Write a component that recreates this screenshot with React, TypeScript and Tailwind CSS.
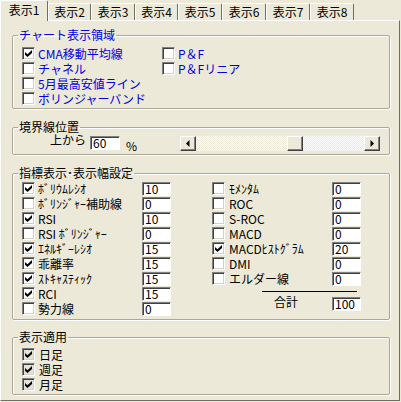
import clsx from "clsx";

const tabs = [
  { label: "表示1", w: "w-[48px]" },
  { label: "表示2", w: "w-[43px]" },
  { label: "表示3", w: "w-[44px]" },
  { label: "表示4", w: "w-[43px]" },
  { label: "表示5", w: "w-[44px]" },
  { label: "表示6", w: "w-[44px]" },
  { label: "表示7", w: "w-[44px]" },
  { label: "表示8", w: "w-[44px]" },
];

const leftRows = [
  { label: "ﾎﾞﾘｳﾑﾚｼｵ", checked: true, value: "10" },
  { label: "ﾎﾞﾘﾝｼﾞｬｰ補助線", checked: false, value: "0" },
  { label: "RSI", checked: true, value: "10" },
  { label: "RSI ﾎﾞﾘﾝｼﾞｬｰ", checked: false, value: "0" },
  { label: "ｴﾈﾙｷﾞｰﾚｼｵ", checked: true, value: "15" },
  { label: "乖離率", checked: true, value: "15" },
  { label: "ｽﾄｷｬｽﾃｨｯｸ", checked: true, value: "15" },
  { label: "RCI", checked: true, value: "15" },
  { label: "勢力線", checked: false, value: "0" },
];

const rightRows = [
  { label: "ﾓﾒﾝﾀﾑ", checked: false, value: "0" },
  { label: "ROC", checked: false, value: "0" },
  { label: "S-ROC", checked: false, value: "0" },
  { label: "MACD", checked: false, value: "0" },
  { label: "MACDﾋｽﾄｸﾞﾗﾑ", checked: true, value: "20" },
  { label: "DMI", checked: false, value: "0" },
  { label: "エルダー線", checked: false, value: "0" },
];

function Check({ checked, grey }: { checked?: boolean; grey?: boolean }) {
  return (
    <span
      className={clsx(
        "relative inline-block w-[13px] h-[13px] shrink-0 border border-t-[#808080] border-l-[#808080] border-r-white border-b-white shadow-[inset_1px_1px_0_#404040,inset_-1px_-1px_0_#d4d0c8]",
        grey ? "bg-[#e4e1d6]" : "bg-white"
      )}
    >
      {checked && (
        <svg className="absolute left-0 top-0" width="11" height="11" viewBox="0 0 11 11">
          <path d="M2 4 L4.5 6.3 L9 2 V5 L4.5 9 L2 6.8 Z" fill="#000" />
        </svg>
      )}
    </span>
  );
}

function Field({ value, w = "w-[29px]" }: { value: string; w?: string }) {
  return (
    <div
      className={clsx(
        "h-[14px] shrink-0 bg-white border border-t-[#808080] border-l-[#808080] border-r-white border-b-white shadow-[inset_1px_1px_0_#404040] pl-[2px] text-[12px] leading-[12px]",
        w
      )}
    >
      {value}
    </div>
  );
}

function ScrollBtn({ dir }: { dir: "l" | "r" }) {
  return (
    <div className="w-[16px] h-[15px] shrink-0 flex items-center justify-center bg-[#ece9d8] border border-t-white border-l-white border-r-[#404040] border-b-[#404040] shadow-[inset_-1px_-1px_0_#808080]">
      <svg width="6" height="7" viewBox="0 0 6 7">
        {dir === "l" ? (
          <path d="M1 3.5 L4.5 0 V7 Z" fill="#000" />
        ) : (
          <path d="M5 3.5 L1.5 0 V7 Z" fill="#000" />
        )}
      </svg>
    </div>
  );
}

const groupCls =
  "ml-[11px] w-[378px] border border-[#aca899] rounded-[2px] shadow-[1px_1px_0_#fff,inset_1px_1px_0_#fff]";
const legendCls = "ml-[5px] px-[1px] leading-[14px] whitespace-nowrap";
const track =
  "h-[15px] bg-[repeating-conic-gradient(#ffffff_0_25%,#ece9d8_0_50%)] bg-[length:2px_2px]";

export default function App() {
  return (
    <div className="w-[401px] h-[402px] bg-[#ece9d8] text-[12px] text-black font-['Noto_Sans_CJK_JP','Noto_Sans',sans-serif] overflow-hidden">
      {/* tabs */}
      <div className="flex h-[20px] items-end">
        {tabs.map((t, i) =>
          i === 0 ? (
            <div
              key={t.label}
              className={clsx(
                "relative z-10 -mb-px h-[21px] border-l border-t border-white border-r border-r-[#716f64] rounded-t-[2px] bg-[#ece9d8] flex justify-center pt-[2px] leading-[14px]",
                t.w
              )}
            >
              {t.label}
            </div>
          ) : (
            <div
              key={t.label}
              className={clsx(
                "h-[17px] border-l border-t border-white border-r border-r-[#716f64] rounded-t-[2px] flex justify-center pt-[1px] leading-[14px]",
                t.w
              )}
            >
              {t.label}
            </div>
          )
        )}
      </div>

      {/* panel */}
      <div className="w-[400px] h-[381px] border border-white border-r-[#716f64] border-b-[#716f64] pt-[7px]">
        {/* チャート表示領域 */}
        <fieldset className={groupCls}>
          <legend className={clsx(legendCls, "text-[#0000e0]")}>チャート表示領域</legend>
          <div className="flex pl-[9px] pt-[4px] pb-[2px] text-[#0000e0]">
            <div className="w-[140px] flex flex-col">
              {[
                { l: "CMA移動平均線", c: true },
                { l: "チャネル", c: false },
                { l: "5月最高安値ライン", c: false },
                { l: "ボリンジャーバンド", c: false },
              ].map((r) => (
                <div key={r.l} className="flex h-[15px] items-center">
                  <Check checked={r.c} />
                  <span className="ml-[3px] leading-[15px] whitespace-nowrap">{r.l}</span>
                </div>
              ))}
            </div>
            <div className="flex flex-col">
              {["P＆F", "P＆Fリニア"].map((l) => (
                <div key={l} className="flex h-[15px] items-center">
                  <Check />
                  <span className="ml-[3px] leading-[15px] whitespace-nowrap">{l}</span>
                </div>
              ))}
            </div>
          </div>
        </fieldset>

        {/* 境界線位置 */}
        <fieldset className={clsx(groupCls, "mt-[11px]")}>
          <legend className={legendCls}>境界線位置</legend>
          <div className="flex items-start h-[15px] mt-[2px] mb-[3px] pl-[37px] pr-[9px]">
            <span className="leading-[14px] -mt-[3px]">上から</span>
            <Field value="60" w="w-[30px] ml-[4px]" />
            <span className="ml-[6px] leading-[14px] mt-[3px]">%</span>
            <div className="ml-auto w-[200px] flex">
              <ScrollBtn dir="l" />
              <div className={clsx(track, "w-[91px]")} />
              <div className="w-[16px] h-[15px] bg-[#ece9d8] border border-t-white border-l-white border-r-[#404040] border-b-[#404040] shadow-[inset_-1px_-1px_0_#808080]" />
              <div className={clsx(track, "flex-1")} />
              <ScrollBtn dir="r" />
            </div>
          </div>
        </fieldset>

        {/* 指標表示・表示幅設定 */}
        <fieldset className={clsx(groupCls, "mt-[11px]")}>
          <legend className={legendCls}>指標表示･表示幅設定</legend>
          <div className="flex pl-[9px] pt-[1px] pb-[3px] gap-[41px]">
            <div className="w-[149px] flex flex-col">
              {leftRows.map((r) => (
                <div key={r.label} className="flex h-[15px] items-center">
                  <Check checked={r.checked} />
                  <span className="ml-[3px] flex-1 leading-[15px] whitespace-nowrap">{r.label}</span>
                  <Field value={r.value} />
                </div>
              ))}
            </div>
            <div className="w-[149px] flex flex-col">
              {rightRows.map((r) => (
                <div key={r.label} className="flex h-[15px] items-center">
                  <Check checked={r.checked} />
                  <span className="ml-[4px] flex-1 leading-[15px] whitespace-nowrap">{r.label}</span>
                  <Field value={r.value} />
                </div>
              ))}
              <div className="mt-[5px] ml-[50px] w-[95px] h-px bg-black" />
              <div className="mt-[5px] flex items-start h-[14px]">
                <span className="ml-[62px] leading-[14px] -mt-[2px]">合計</span>
                <Field value="100" w="w-[29px] ml-auto" />
              </div>
            </div>
          </div>
        </fieldset>

        {/* 表示適用 */}
        <fieldset className={clsx(groupCls, "mt-[10px]")}>
          <legend className={legendCls}>表示適用</legend>
          <div className="flex flex-col pl-[9px] pt-[3px] pb-[2px]">
            {["日足", "週足", "月足"].map((l) => (
              <div key={l} className="flex h-[15px] items-center">
                <Check checked grey />
                <span className="ml-[4px] leading-[15px]">{l}</span>
              </div>
            ))}
          </div>
        </fieldset>
      </div>
    </div>
  );
}
